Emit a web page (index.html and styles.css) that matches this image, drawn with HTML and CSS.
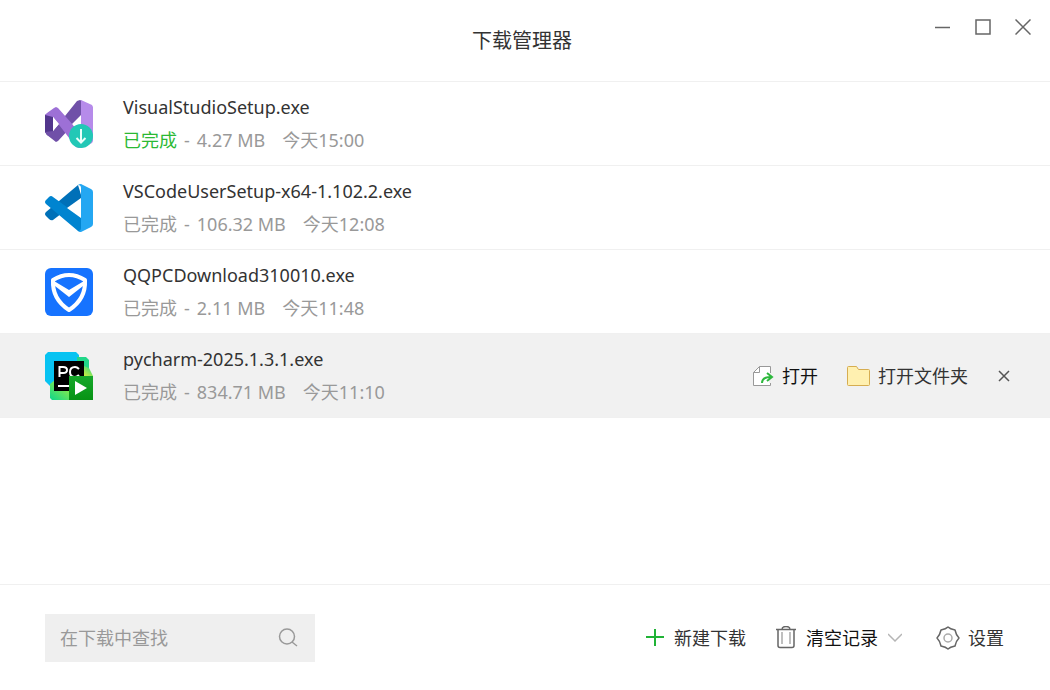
FILE: index.html
```html
<!DOCTYPE html>
<html lang="zh-CN">
<head>
    <meta charset="UTF-8">
    <meta name="viewport" content="width=device-width, initial-scale=1.0">
    <title>下载管理器</title>
    <link rel="stylesheet" href="styles.css">
</head>
<body>
    <header class="titlebar">
        <h1>下载管理器</h1>
        <div class="window-controls">
            <button type="button" aria-label="最小化">
                <svg width="16" height="16" viewBox="0 0 16 16"><path d="M0 8.5h15"/></svg>
            </button>
            <button type="button" aria-label="最大化">
                <svg width="16" height="16" viewBox="0 0 16 16"><path d="M1 1h14v14H1z"/></svg>
            </button>
            <button type="button" aria-label="关闭">
                <svg width="16" height="16" viewBox="0 0 16 16"><path d="M.5 .5l15 15M15.5 .5l-15 15"/></svg>
            </button>
        </div>
    </header>

    <main>
        <ul class="downloads">
            <li class="item">
                <svg class="app-icon" viewBox="0 0 48 48">
                    <path fill="#52368c" d="M0 15l8-5v28l-6-3-2-3z"/>
                    <path fill="#7050a8" d="M0 32l8-1L32 1l3-1 2 1v14L13 41l-2 1-9-7z"/>
                    <path fill="#9d70d6" d="M0 15l2-2 7-5 2-1 2 1 24 27v12l-3 1-3-1L8 17z"/>
                    <path fill="#b68bea" d="M36 0l11 5 1 2v34l-1 2-11 5z"/>
                    <path fill="#fff" d="M8 17l6 7-6 7zM36 15v18l-9-9z"/>
                    <circle cx="36" cy="36" r="12" fill="#22c8b6"/>
                    <path fill="none" stroke="#eafffb" stroke-width="2" d="M36 29v13M31.5 38l4.500 4.500 4.500-4.500"/>
                </svg>
                <div class="info">
                    <div class="name">VisualStudioSetup.exe</div>
                    <div class="meta"><span class="status fresh">已完成</span><span>-</span><span>4.27 MB</span><time>今天15:00</time></div>
                </div>
            </li>
            <li class="item">
                <svg class="app-icon" viewBox="0 0 48 48">
                    <path fill="#0070b8" d="M33 1l4 13L8 36q-2 1-4-1l-3-3q-2-2 0-4z"/>
                    <path fill="#0084d0" d="M1 20q-2-2 0-4l3-3q2-2 4 0l29 21-1 14-3-1z"/>
                    <path fill="#24a7f2" d="M36 0l10 5q2 1 2 3v32q0 2-2 3l-10 5q-2 0-3-1 3 0 3-3V4q0-3-3-3 1-1 3-1z"/>
                    <path fill="#fff" d="M36 14v20L22 24z"/>
                </svg>
                <div class="info">
                    <div class="name">VSCodeUserSetup-x64-1.102.2.exe</div>
                    <div class="meta"><span class="status">已完成</span><span>-</span><span>106.32 MB</span><time>今天12:08</time></div>
                </div>
            </li>
            <li class="item">
                <svg class="app-icon" viewBox="0 0 48 48">
                    <rect width="48" height="48" rx="6" fill="#1673ff"/>
                    <path fill="none" stroke="#fff" stroke-width="4" stroke-linejoin="round" d="M24 7q8 0 16 5 1 19-16 30Q7 31 8 12q8-5 16-5z"/>
                    <path fill="#fff" d="M9 13l15 9 15-9-1 5-14 11-14-11z"/>
                </svg>
                <div class="info">
                    <div class="name">QQPCDownload310010.exe</div>
                    <div class="meta"><span class="status">已完成</span><span>-</span><span>2.11 MB</span><time>今天11:48</time></div>
                </div>
            </li>
            <li class="item active">
                <svg class="app-icon" viewBox="0 0 48 48">
                    <defs>
                        <linearGradient id="mint" x1="0" y1="1" x2="1" y2="0">
                            <stop offset="0" stop-color="#0cd68b"/>
                            <stop offset=".4" stop-color="#8cea4a"/>
                            <stop offset=".7" stop-color="#f4f22c"/>
                            <stop offset="1" stop-color="#21d789"/>
                        </linearGradient>
                        <linearGradient id="play" x1="0" y1="0" x2="0" y2="1">
                            <stop offset="0" stop-color="#17a82b"/>
                            <stop offset="1" stop-color="#079314"/>
                        </linearGradient>
                    </defs>
                    <path fill="#07c3f2" d="M3 0h28l3 3v7L9 34H5l-5-5V3z"/>
                    <path fill="#21d789" d="M32 5h9l3 3v8H32z"/>
                    <path fill="url(#mint)" d="M5 32l5-4 29-14 5 2 4 8v24H7l-2-2z"/>
                    <path d="M9 9h30v30H9z"/>
                    <path fill="none" stroke="#fff" stroke-width="2" d="M14.5 25V15H18q4 0 4 3t-4 3h-3.5M34 17q-2-2-4-2-5 0-5 5t5 5q2 0 4-2"/>
                    <path fill="#fff" d="M13 33h11v2H13z"/>
                    <path fill="url(#play)" d="M24 24h24v24H24z"/>
                    <path fill="#fff" d="M30 29l12 7-12 7z"/>
                </svg>
                <div class="info">
                    <div class="name">pycharm-2025.1.3.1.exe</div>
                    <div class="meta"><span class="status">已完成</span><span>-</span><span>834.71 MB</span><time>今天11:10</time></div>
                </div>
                <div class="actions">
                    <button type="button" class="open">
                        <svg width="22" height="22" viewBox="0 0 22 22" fill="none">
                            <path fill="#fff" stroke="#999" d="M7.500 1.500h11v19h-17v-13z"/>
                            <path stroke="#999" d="M7.500 1.500v6h-6"/>
                            <path stroke="#f1f1f1" stroke-width="3" d="M18.500 8v10"/>
                            <path stroke="#2db83d" stroke-width="2" d="M10 18q0-6 9-6M15 8l5 4-5 4"/>
                        </svg>
                        打开
                    </button>
                    <button type="button" class="open-folder">
                        <svg width="24" height="22" viewBox="0 0 24 22">
                            <path fill="#fff0b0" stroke="#d6ad51" stroke-linejoin="round" d="M1.500 2.500q0-1 1-1h8l2 3h10q1 0 1 1v14q0 1-1 1h-20q-1 0-1-1z"/>
                        </svg>
                        打开文件夹
                    </button>
                    <button type="button" class="remove" aria-label="删除">
                        <svg width="12" height="12" viewBox="0 0 12 12"><path stroke="#555" stroke-width="1.500" d="M1 1l10 10M11 1L1 11"/></svg>
                    </button>
                </div>
            </li>
        </ul>
    </main>

    <footer class="toolbar">
        <form class="search" role="search">
            <input type="text" placeholder="在下载中查找" aria-label="在下载中查找">
            <button type="button" aria-label="搜索">
                <svg width="20" height="20" viewBox="0 0 20 20" fill="none" stroke="#999" stroke-width="1.500"><circle cx="9" cy="8.500" r="7.500"/><path d="M14 14l5 4"/></svg>
            </button>
        </form>
        <div class="tools">
            <button type="button" class="new">
                <svg width="18" height="18" viewBox="0 0 18 18"><path stroke="#20b336" stroke-width="2" d="M9 0v17M0 8h18"/></svg>
                新建下载
            </button>
            <button type="button" class="clear">
                <svg width="20" height="24" viewBox="0 0 20 24" fill="none" stroke="#666">
                    <path stroke-width="1.500" d="M0 3.500h20M6 3.500q0-3 4-3t4 3M2 3.500v16q0 2 2 2h12q2 0 2-2v-16"/>
                    <path stroke="#aaa" stroke-width="1.500" d="M6 6v12M14 6v12"/>
                </svg>
                清空记录
                <svg width="14" height="10" viewBox="0 0 14 10"><path fill="none" stroke="#b5b5b5" stroke-width="1.500" d="M0 1l7 7 7-7"/></svg>
            </button>
            <button type="button" class="settings">
                <svg width="24" height="24" viewBox="0 0 24 24" fill="none" stroke="#666" stroke-width="1.500">
                    <path stroke-linejoin="round" d="M12 1q2 2 7 3 1 5 4 8-3 3-4 8-5 1-7 3-2-2-7-3-1-5-4-8 3-3 4-8 5-1 7-3z"/>
                    <circle cx="12" cy="12" r="4" stroke="#aaa"/>
                </svg>
                设置
            </button>
        </div>
    </footer>
</body>
</html>
```

FILE: styles.css
```css
* {
    box-sizing: border-box;
}

body {
    margin: 0;
    min-height: 100vh;
    display: flex;
    flex-direction: column;
    background: #fff;
    color: #333;
    font-family: "Noto Sans", "Noto Sans CJK SC", sans-serif;
    font-size: 18px;
}

button {
    display: flex;
    align-items: center;
    padding: 0;
    border: none;
    background: none;
    color: inherit;
    font: inherit;
    line-height: 24px;
    white-space: nowrap;
    cursor: pointer;
}

svg {
    display: block;
    flex: none;
}

.titlebar {
    display: grid;
    grid-template-columns: 1fr auto 1fr;
    height: 82px;
    padding: 0 19px 0 13px;
    border-bottom: 1px solid #f0f0f0;
}

.titlebar h1 {
    grid-column: 2;
    margin: 0;
    font-size: 20px;
    font-weight: 400;
    line-height: 82px;
}

.window-controls {
    display: flex;
    justify-content: flex-end;
    align-items: flex-start;
    gap: 24px;
    padding-top: 19px;
}

.window-controls path {
    fill: none;
    stroke: #666;
    stroke-width: 1.5;
}

main {
    flex: 1;
}

.downloads {
    margin: 0;
    padding: 0;
    list-style: none;
}

.item {
    display: flex;
    align-items: center;
    height: 84px;
    padding: 0 34px 0 45px;
    border-bottom: 1px solid #f0f0f0;
}

.item.active,
.item:hover {
    background: #f1f1f1;
}

.app-icon {
    width: 48px;
    height: 48px;
    margin-right: 30px;
}

.info {
    flex: 1;
    line-height: 33px;
    white-space: nowrap;
}

.meta {
    display: flex;
    gap: 7px;
    color: #999;
}

.meta time {
    margin-left: 10px;
}

.status.fresh {
    color: #2bb934;
}

.actions {
    display: flex;
    align-items: center;
}

.actions button,
.settings {
    gap: 8px;
}

.open {
    color: #111;
}

.actions .open-folder {
    margin-left: 28px;
}

.actions .remove {
    margin-left: 24px;
    padding: 6px;
}

.toolbar {
    display: flex;
    justify-content: space-between;
    align-items: center;
    height: 106px;
    padding: 0 46px 0 45px;
    border-top: 1px solid #f0f0f0;
}

.search {
    display: flex;
    align-items: center;
    width: 270px;
    height: 48px;
    padding: 0 17px 0 15px;
    background: #efefef;
}

.search input {
    flex: 1;
    min-width: 0;
    padding: 0;
    border: none;
    outline: none;
    background: none;
    color: #333;
    font: inherit;
}

.search input::placeholder {
    color: #999;
    opacity: 1;
}

.tools {
    display: flex;
    align-items: center;
    gap: 30px;
}

.new,
.clear {
    gap: 10px;
}

.clear {
    margin-right: 4px;
    color: #111;
}
```
